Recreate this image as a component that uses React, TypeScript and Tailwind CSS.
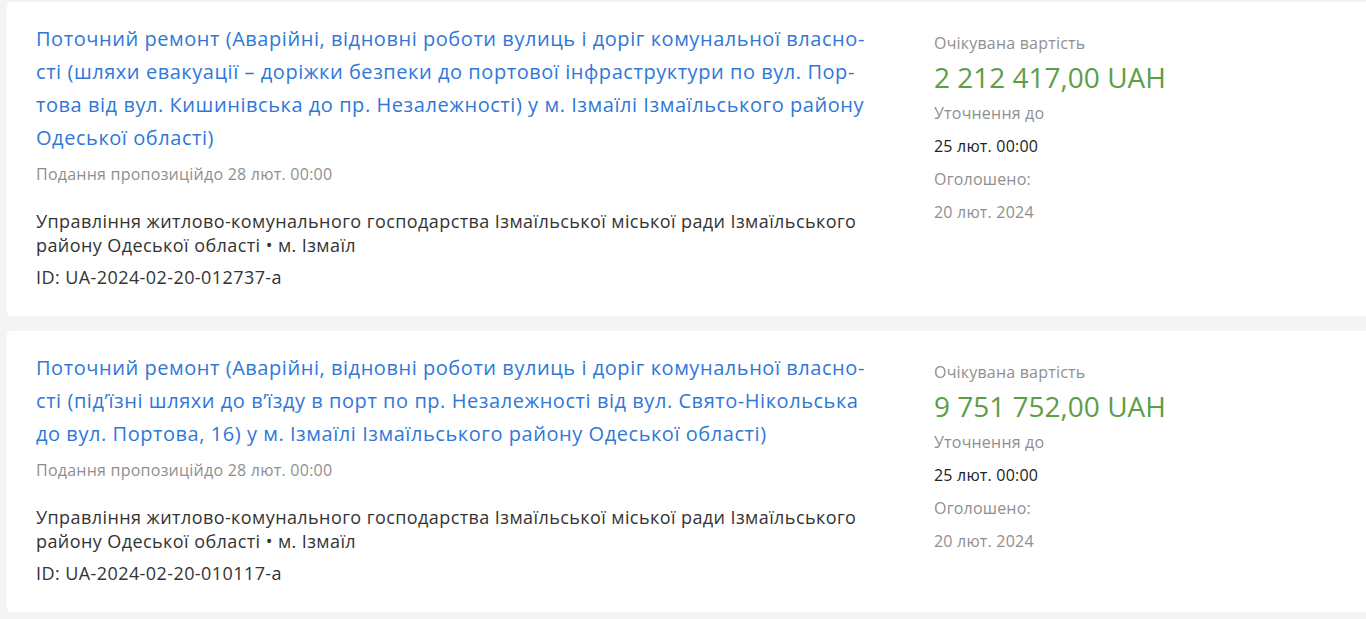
const tenders = [
  {
    title:
      "Поточний ремонт (Аварійні, відновні роботи вулиць і доріг комунальної власно\u00ADсті (шляхи евакуації – доріжки безпеки до портової інфраструктури по вул. Пор\u00ADтова від вул. Кишинівська до пр. Незалежності) у м. Ізмаїлі Ізмаїльського району Одеської області)",
    deadline: "28 лют. 00:00",
    org: "Управління житлово-комунального господарства Ізмаїльської міської ради Ізмаїльського району Одеської області • м. Ізмаїл",
    id: "UA-2024-02-20-012737-a",
    amount: "2 212 417,00 UAH",
    clarify: "25 лют. 00:00",
    published: "20 лют. 2024",
  },
  {
    title:
      "Поточний ремонт (Аварійні, відновні роботи вулиць і доріг комунальної власно\u00ADсті (під’їзні шляхи до в’їзду в порт по пр. Незалежності від вул. Свято-Нікольська до вул. Портова, 16) у м. Ізмаїлі Ізмаїльського району Одеської області)",
    deadline: "28 лют. 00:00",
    org: "Управління житлово-комунального господарства Ізмаїльської міської ради Ізмаїльського району Одеської області • м. Ізмаїл",
    id: "UA-2024-02-20-010117-a",
    amount: "9 751 752,00 UAH",
    clarify: "25 лют. 00:00",
    published: "20 лют. 2024",
  },
];

type Tender = (typeof tenders)[number];

const TenderCard = ({ t }: { t: Tender }) => {
  return (
    <div className="flex bg-white rounded-l-[4px] pl-[29px] pt-[20px] pb-[27px]">
      {/* Main info */}
      <div className="w-[850px] shrink-0">
        <a
          href="#"
          className="block w-[840px] text-[20px] leading-[33px] tracking-[0.55px] text-[#2f78d8]"
        >
          {t.title}
        </a>
        <div className="mt-[8px] text-[16px] leading-[24px] tracking-[0.24px] text-[#8f8f8f]">
          Подання пропозицій{"до " + t.deadline}
        </div>
        <div className="mt-[23px] w-[830px] text-[18px] leading-[24px] tracking-[0.42px] text-[#333]">
          {t.org}
        </div>
        <div className="mt-[8px] text-[18px] leading-[24px] tracking-[0.42px] text-[#333]">
          ID: {t.id}
        </div>
      </div>

      {/* Price & dates */}
      <div className="ml-[48px] pt-[5px] text-[16px] tracking-[0.2px]">
        <div className="leading-[33px] text-[#8f8f8f]">Очікувана вартість</div>
        <div className="mb-[3px] text-[28px] leading-[34px] tracking-normal text-[#5c9e48]">
          {t.amount}
        </div>
        <div className="leading-[33px] text-[#8f8f8f]">Уточнення до</div>
        <div className="leading-[33px] text-[#222]">{t.clarify}</div>
        <div className="leading-[33px] text-[#8f8f8f]">Оголошено:</div>
        <div className="leading-[33px] text-[#8f8f8f]">{t.published}</div>
      </div>
    </div>
  );
};

export default function App() {
  return (
    <div
      className="min-h-screen bg-[#f4f4f4] pl-[7px] pt-[2px] flex flex-col gap-[15px]"
      style={{ fontFamily: '"Open Sans", "Noto Sans", sans-serif' }}
    >
      {tenders.map((t) => (
        <TenderCard key={t.id} t={t} />
      ))}
    </div>
  );
}
